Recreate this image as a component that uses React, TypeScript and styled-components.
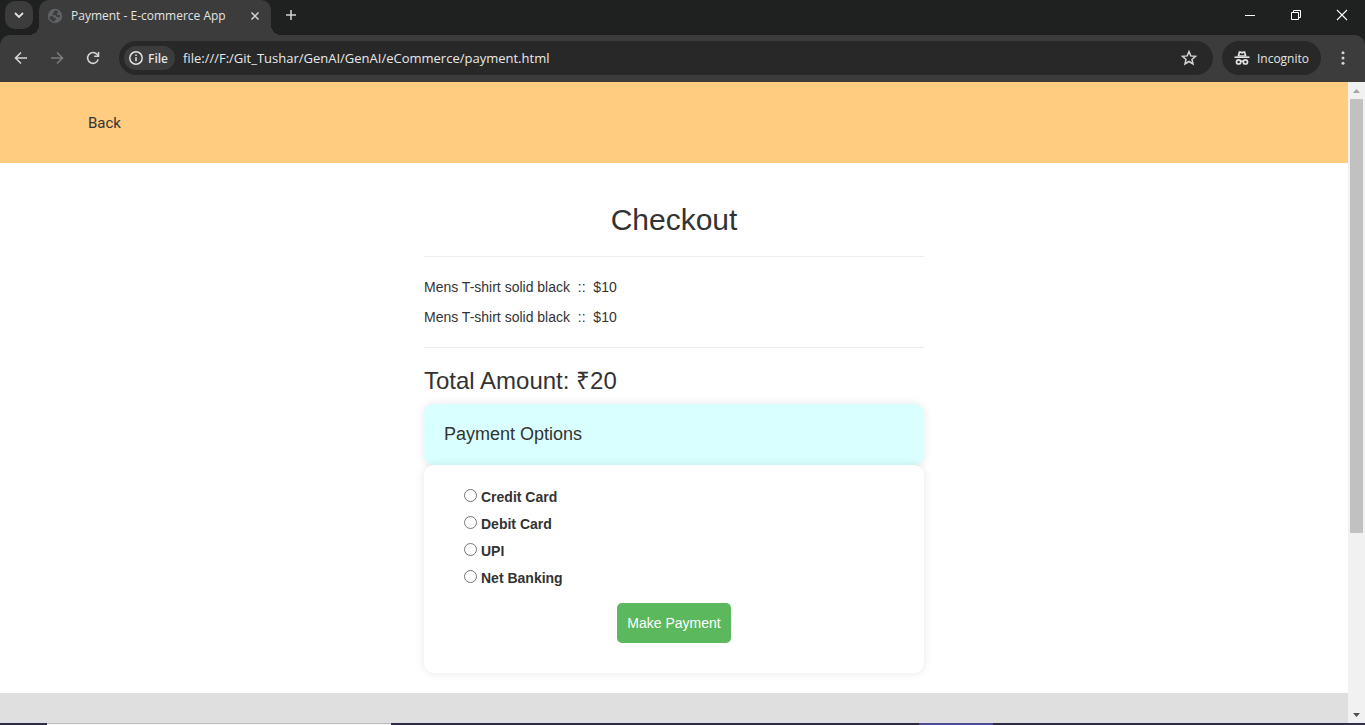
import React from 'react';
import styled, { createGlobalStyle, css } from 'styled-components';

const Global = createGlobalStyle`
  *, *::before, *::after { box-sizing: border-box; }
  body { margin: 0; }
  body, button, input { font-family: 'Liberation Sans', Arial, sans-serif; }
  h2, h3, h4, p, ul { margin: 0; padding: 0; font-weight: 400; }
  button { border: 0; padding: 0; background: none; color: inherit; }
`;

const uiFont = css`font-family: 'Open Sans', 'Noto Sans', sans-serif;`;

const Window = styled.div`
  display: flex;
  flex-direction: column;
  min-height: 100vh;
  background: #1f2120;
`;

const TabStrip = styled.header`
  ${uiFont}
  display: flex;
  height: 35px;
  padding-left: 5px;
  color: #e3e3e3;
`;

const TabSearch = styled.button`
  display: grid;
  place-items: center;
  width: 28px;
  height: 28px;
  margin: 1px 6px 0 0;
  border-radius: 10px;
  background: #3c3c3c;
`;

const Tab = styled.div`
  position: relative;
  display: flex;
  align-items: center;
  width: 232px;
  height: 35px;
  padding: 0 8px 4px;
  border-radius: 10px 10px 0 0;
  background: #3c3c3c;
  font-size: 12px;
  &::before, &::after {
    content: '';
    position: absolute;
    bottom: 0;
    width: 10px;
    height: 10px;
  }
  &::before { right: 100%; background: radial-gradient(circle at 0 0, transparent 10px, #3c3c3c 10px); }
  &::after { left: 100%; background: radial-gradient(circle at 100% 0, transparent 10px, #3c3c3c 10px); }
`;

const TabTitle = styled.span`
  flex: 1;
  padding-left: 8px;
  white-space: nowrap;
`;

const IconButton = styled.button<{ $w?: number; $h?: number; $dim?: boolean }>`
  display: grid;
  place-items: center;
  flex: none;
  width: ${p => p.$w ?? 36}px;
  height: ${p => p.$h ?? 30}px;
  color: ${p => (p.$dim ? '#7b7b7b' : '#d4d4d4')};
`;

const WindowControls = styled.div`
  display: flex;
  margin-left: auto;
  ${IconButton} { color: #fff; }
`;

const Toolbar = styled.nav`
  ${uiFont}
  display: flex;
  align-items: center;
  height: 47px;
  padding: 0 4px 1px 3px;
  border-radius: 10px 10px 0 0;
  background: #3c3c3c;
  color: #e3e3e3;
`;

const AddressBar = styled.div`
  display: flex;
  align-items: center;
  flex: 1;
  height: 34px;
  margin-left: 8px;
  padding: 0 6px 0 5px;
  border-radius: 17px;
  background: #282828;
`;

const FileChip = styled.button`
  ${uiFont}
  display: flex;
  align-items: center;
  gap: 4px;
  height: 24px;
  padding: 0 7px 0 4px;
  border-radius: 12px;
  background: #3c3c3c;
  font-size: 12px;
  font-weight: 600;
`;

const Address = styled.input`
  && { ${uiFont} }
  flex: 1;
  min-width: 0;
  margin-left: 8px;
  padding: 0;
  border: 0;
  outline: 0;
  background: none;
  color: #e8e8e8;
  font-size: 13px;
`;

const Incognito = styled.button`
  ${uiFont}
  display: flex;
  align-items: center;
  gap: 7px;
  height: 34px;
  margin: 0 4px 0 9px;
  padding: 0 12px;
  border-radius: 17px;
  background: #282828;
  font-size: 12px;
`;

const Viewport = styled.div`
  display: flex;
  flex: 1;
`;

const Page = styled.div`
  display: flex;
  flex-direction: column;
  flex: 1;
  background: #fff;
  color: #333;
  font-size: 14px;
  line-height: 20px;
`;

const Banner = styled.header`
  display: flex;
  align-items: center;
  height: 81px;
  padding-left: 88px;
  background: #ffcc80;
`;

const BackLink = styled.a`
  color: #333;
  font-family: Roboto, sans-serif;
  font-size: 15px;
  text-decoration: none;
`;

const Checkout = styled.main`
  flex: 1;
  width: 500px;
  max-width: 100%;
  margin: 0 auto;
  padding: 40px 0 20px;
`;

const Title = styled.h2`
  font-size: 30px;
  line-height: 33px;
  text-align: center;
`;

const Rule = styled.hr`
  height: 1px;
  margin: 20px 0;
  border: 0;
  background: #eee;
`;

const Items = styled.div`
  display: grid;
  gap: 10px;
`;

const Item = styled.p`
  white-space: pre;
`;

const Total = styled.h3`
  margin-bottom: 10px;
  font-size: 24px;
  line-height: 26px;
`;

const Card = styled.section<{ $tone: 'aqua' | 'white' }>`
  border-radius: 10px;
  box-shadow: 0 0 10px rgba(0, 0, 0, 0.1);
  ${p => p.$tone === 'aqua'
    ? css`padding: 20px; background: #daffff;`
    : css`padding: 22px 40px 30px; background: #fff;`}
`;

const CardTitle = styled.h4`
  font-size: 18px;
  line-height: 21px;
`;

const Options = styled.form`
  display: grid;
  gap: 7px;
`;

const Option = styled.label`
  display: flex;
  gap: 4px;
  font-weight: 700;
`;

const Radio = styled.input`
  width: 13px;
  height: 13px;
  margin: 2px 0 0;
`;

const PayButton = styled.button`
  justify-self: center;
  height: 40px;
  margin-top: 8px;
  padding: 0 10px;
  border-radius: 5px;
  background: #5cb85c;
  color: #fff;
  font-size: 14px;
`;

const Footer = styled.footer`
  height: 30px;
  background: #dfdfdf;
`;

const Scrollbar = styled.div`
  display: flex;
  flex-direction: column;
  width: 17px;
  background: #f1f1f1;
`;

const ScrollArrow = styled.button<{ $down?: boolean }>`
  display: grid;
  place-items: center;
  height: 17px;
  color: ${p => (p.$down ? '#505050' : '#a3a3a3')};
`;

const Track = styled.div`
  flex: 1;
  padding: 0 2px;
`;

const Thumb = styled.div`
  height: 71.5%;
  background: #c1c1c1;
`;

const Taskbar = styled.div`
  display: flex;
  height: 2px;
  background: #2f2d45;
`;

const TaskItem = styled.span<{ $left: number; $width: number; $light?: boolean }>`
  width: ${p => p.$width}px;
  margin-left: ${p => p.$left}px;
  background: ${p => (p.$light ? '#f5f5f5' : '#4d4a94')};
  border-top: ${p => (p.$light ? '1px solid #bdbdbd' : '0')};
`;

const Stroke = ({ d, size = 16, w = 2 }: { d: string; size?: number; w?: number }) => (
  <svg width={size} height={size} viewBox="0 0 16 16" fill="none" stroke="currentColor" strokeWidth={w}>
    <path d={d} />
  </svg>
);

const Globe = () => (
  <svg width="16" height="16" viewBox="0 0 16 16">
    <circle cx="8" cy="8" r="7.2" fill="#5f6368" />
    <path d="M9 2.300 6.800 3.200 6.900 4.600 5.500 5.500 6 7.200 8.800 7.200 9.800 8.900 12.600 9.300 13.700 7.500 12 7 10.600 7.300 9.600 6 11 4.800 11.200 3.200ZM2.300 8.200 2.900 10.600 4.700 12.800 7.600 13.700 7.700 12.300 9.300 11.600 8.900 10.200 6.900 9.800 5.700 8.300Z" fill="#3c3c3c" />
  </svg>
);

const Info = () => (
  <svg width="16" height="16" viewBox="0 0 16 16" fill="none" stroke="currentColor">
    <circle cx="8" cy="8" r="6.2" strokeWidth="1.5" />
    <path d="M8 7.2v4M8 4.5v1.5" strokeWidth="1.5" />
  </svg>
);

const Reload = () => (
  <svg width="16" height="16" viewBox="0 0 16 16" fill="none" stroke="currentColor" strokeWidth="1.6">
    <path d="M13.200 9.400A5.400 5.400 0 1 1 12 4.300L13.400 5.800" />
    <path d="M13.500 2v4.300H9.200" />
  </svg>
);

const Star = () => (
  <svg width="18" height="18" viewBox="0 0 18 18" fill="none" stroke="currentColor" strokeWidth="1.5">
    <path d="m9 2.600 1.800 4.300 4.700.4-3.500 3.100 1 4.600-4-2.500-4 2.500 1-4.600-3.500-3.100 4.700-.4Z" />
  </svg>
);

const Spy = () => (
  <svg width="16" height="16" viewBox="0 0 16 16" fill="none" stroke="currentColor">
    <path d="M.5 7.200h15" strokeWidth="1.600" />
    <path d="M3.400 6.500 4.800 1.200h1.700L8 1.800l1.500-.6h1.700L12.600 6.500Z" fill="currentColor" stroke="none" />
    <path d="M5.500 5.300h5L9.900 3.100 8 3.700l-1.900-.6Z" fill="#282828" stroke="none" />
    <circle cx="4.600" cy="11.900" r="2.100" strokeWidth="1.700" />
    <circle cx="11.400" cy="11.900" r="2.100" strokeWidth="1.700" />
    <path d="M6.500 11.500q1.500-.8 3 0" strokeWidth="1.500" />
  </svg>
);

const Dots = () => (
  <svg width="16" height="16" viewBox="0 0 16 16" fill="currentColor">
    <circle cx="8" cy="2.800" r="1.500" />
    <circle cx="8" cy="8" r="1.500" />
    <circle cx="8" cy="13.200" r="1.500" />
  </svg>
);

const Triangle = ({ down }: { down?: boolean }) => (
  <svg width="7" height="4" viewBox="0 0 7 4" fill="currentColor">
    <path d={down ? 'M0 0h7L3.500 4Z' : 'M0 4h7L3.500 0Z'} />
  </svg>
);

const items = [
  { name: 'Mens T-shirt solid black', price: '$10' },
  { name: 'Mens T-shirt solid black', price: '$10' },
];

const methods = ['Credit Card', 'Debit Card', 'UPI', 'Net Banking'];

export default function App() {
  return (
    <Window>
      <Global />
      <TabStrip>
        <TabSearch aria-label="Search tabs"><Stroke d="m4 6 4 4 4-4" w={1.8} /></TabSearch>
        <Tab>
          <Globe />
          <TabTitle>Payment - E-commerce App</TabTitle>
          <IconButton $w={16} $h={16} aria-label="Close tab"><Stroke d="m4.500 4.500 7 7m0-7-7 7" w={1.5} /></IconButton>
        </Tab>
        <IconButton $w={40} aria-label="New tab"><Stroke d="M8 3v10M3 8h10" w={1.5} /></IconButton>
        <WindowControls>
          <IconButton $w={46} aria-label="Minimize"><Stroke d="M3 8.500h10" w={1} /></IconButton>
          <IconButton $w={46} aria-label="Restore"><Stroke d="M3.500 5.500h7v7h-7ZM5.500 5.500v-2h7v7h-2" w={1} /></IconButton>
          <IconButton $w={46} aria-label="Close"><Stroke d="m3 3 10 10M13 3 3 13" w={1.1} /></IconButton>
        </WindowControls>
      </TabStrip>
      <Toolbar>
        <IconButton aria-label="Back"><Stroke d="M14 8H3M8 2.500 2.500 8 8 13.500" w={1.6} /></IconButton>
        <IconButton $dim aria-label="Forward"><Stroke d="M2 8h11M8 2.500 13.500 8 8 13.500" w={1.6} /></IconButton>
        <IconButton aria-label="Reload"><Reload /></IconButton>
        <AddressBar>
          <FileChip><Info />File</FileChip>
          <Address aria-label="Address" readOnly value="file:///F:/Git_Tushar/GenAI/GenAI/eCommerce/payment.html" />
          <IconButton aria-label="Bookmark this page"><Star /></IconButton>
        </AddressBar>
        <Incognito><Spy />Incognito</Incognito>
        <IconButton aria-label="Menu"><Dots /></IconButton>
      </Toolbar>
      <Viewport>
        <Page>
          <Banner><BackLink href="#">Back</BackLink></Banner>
          <Checkout>
            <Title>Checkout</Title>
            <Rule />
            <Items>
              {items.map((item, i) => (
                <Item key={i}>{`${item.name}  ::  ${item.price}`}</Item>
              ))}
            </Items>
            <Rule />
            <Total>Total Amount: ₹20</Total>
            <Card $tone="aqua"><CardTitle>Payment Options</CardTitle></Card>
            <Card $tone="white">
              <Options>
                {methods.map(method => (
                  <Option key={method}><Radio type="radio" name="method" />{method}</Option>
                ))}
                <PayButton type="button">Make Payment</PayButton>
              </Options>
            </Card>
          </Checkout>
          <Footer />
        </Page>
        <Scrollbar>
          <ScrollArrow aria-label="Scroll up"><Triangle /></ScrollArrow>
          <Track><Thumb /></Track>
          <ScrollArrow $down aria-label="Scroll down"><Triangle down /></ScrollArrow>
        </Scrollbar>
      </Viewport>
      <Taskbar>
        <TaskItem $left={47} $width={344} $light />
        <TaskItem $left={528} $width={74} />
      </Taskbar>
    </Window>
  );
}
